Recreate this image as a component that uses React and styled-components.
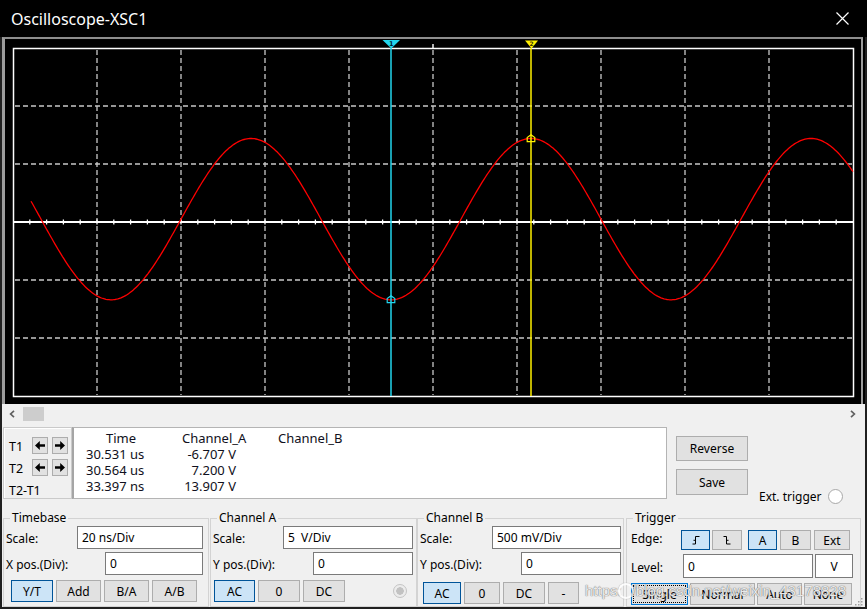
import styled, { createGlobalStyle } from 'styled-components';

const GlobalStyle = createGlobalStyle`
  html, body {
    margin: 0;
    padding: 0;
    background: #000;
  }
  body {
    font-family: "Noto Sans", "Open Sans", sans-serif;
    color: #000;
  }
`;

// screen geometry (page pixels)
const LEFT = 13;
const TOP = 49;
const DIV_X = 84;
const DIV_Y = 58;
const MID_Y = TOP + DIV_Y * 3;
const T1_X = 391;
const T2_X = 531;

const wavePoints = () => {
   const pts = [];
   for (let x = 31; x <= 853; x += 1.5) {
      const v = 0.2465 + 6.9535 * Math.cos((2 * Math.PI * (x - T2_X)) / 280);
      pts.push(`${x.toFixed(1)},${(MID_Y - v * 11.6).toFixed(1)}`);
   }
   return pts.join(' ');
};

const vLines = [1, 2, 3, 4, 5, 6, 7, 8, 9].map((i) => LEFT + DIV_X * i);
const hLines = [1, 2, 4, 5].map((j) => TOP + DIV_Y * j);
const ticks = Array.from({ length: 49 }, (_, k) => LEFT + 16.8 * (k + 1));

function Scope() {
   return (
      <ScopeSvg width="856" height="365" viewBox="5 40 856 365">
         <rect x="13.5" y="49.5" width="840" height="348" fill="none" stroke="#fff" strokeWidth="1.5" />
         {vLines.map((x) => (
            <line key={x} x1={x} y1="51" x2={x} y2="396" stroke="#c8c8c8" strokeWidth="1.3" strokeDasharray="5 3" />
         ))}
         {hLines.map((y) => (
            <line key={y} x1="15" y1={y} x2="852" y2={y} stroke="#c8c8c8" strokeWidth="1.3" strokeDasharray="5 3" />
         ))}
         <line x1="14" y1={MID_Y} x2="853" y2={MID_Y} stroke="#fff" strokeWidth="1.8" />
         {ticks.map((x) => (
            <line key={x} x1={x} y1={MID_Y - 2.5} x2={x} y2={MID_Y + 2.5} stroke="#fff" strokeWidth="1.3" />
         ))}
         <line x1="433" y1="45" x2="433" y2="49" stroke="#fff" strokeWidth="1.4" />

         <polyline points={wavePoints()} fill="none" stroke="#ff0000" strokeWidth="1.3" />

         <line x1={T1_X} y1="49" x2={T1_X} y2="397" stroke="#22d6ee" strokeWidth="1.5" />
         <line x1={T2_X} y1="49" x2={T2_X} y2="397" stroke="#fff000" strokeWidth="1.5" />

         <polygon points="382.5,41 400,41 391.3,49.5" fill="#22d6ee" />
         <text x="391.3" y="46.6" fontSize="6.5" fontWeight="700" textAnchor="middle" fill="#023" fontFamily="DejaVu Sans, sans-serif">1</text>
         <polygon points="525,41.5 538,41.5 531.5,49.5" fill="#fff000" />
         <text x="531.5" y="46.8" fontSize="6" fontWeight="700" textAnchor="middle" fill="#330" fontFamily="DejaVu Sans, sans-serif">2</text>

         <polygon points="391,296.8 394.8,299.6 394.8,303.6 387.2,303.6 387.2,299.6" fill="none" stroke="#22d6ee" strokeWidth="1.2" />
         <polygon points="531,135.8 534.8,138.6 534.8,142.6 527.2,142.6 527.2,138.6" fill="none" stroke="#fff000" strokeWidth="1.2" />
      </ScopeSvg>
   );
}

const Chevron = ({ dir }) => (
   <svg width="6" height="8" viewBox="0 0 6 8">
      <polyline
         points={dir === 'left' ? '5,0.8 1.6,4 5,7.2' : '1,0.8 4.4,4 1,7.2'}
         fill="none"
         stroke="#606060"
         strokeWidth="1.7"
      />
   </svg>
);

const Arrow = ({ dir }) => (
   <svg width="10" height="9" viewBox="0 0 10 9">
      <path
         d={dir === 'left' ? 'M0 4.5 L4.8 0 V3.2 H10 V5.8 H4.8 V9 Z' : 'M10 4.5 L5.2 0 V3.2 H0 V5.8 H5.2 V9 Z'}
         fill="#000"
      />
   </svg>
);

const EdgeIcon = ({ rising }) => (
   <svg width="8" height="9" viewBox="0 0 8 9">
      <path
         d={rising ? 'M0.5 8 H3.5 V0.5 H7.5 M1.5 4.3 H3.5' : 'M0.5 0.5 H3.5 V8 H7.5 M3.5 4.3 H5.5'}
         fill="none"
         stroke="#000"
         strokeWidth="1"
      />
   </svg>
);

function App() {
   return (
      <>
         <GlobalStyle />
         <Window>
            <TitleBar>
               <Title>Oscilloscope-XSC1</Title>
               <CloseIcon width="13" height="13" viewBox="0 0 13 13">
                  <path d="M0.5 0.5 L12.5 12.5 M12.5 0.5 L0.5 12.5" stroke="#fff" strokeWidth="1.2" />
               </CloseIcon>
            </TitleBar>
            <Body>
               <Screen>
                  <Scope />
               </Screen>

               <ScrollRow>
                  <Chevron dir="left" />
                  <Thumb />
                  <ScrollEnd>
                     <Chevron dir="right" />
                  </ScrollEnd>
               </ScrollRow>

               <MiddleRow>
                  <CursorBox>
                     <CursorRow>
                        <CursorLabel>T1</CursorLabel>
                        <ArrowBtn><Arrow dir="left" /></ArrowBtn>
                        <ArrowBtn><Arrow dir="right" /></ArrowBtn>
                     </CursorRow>
                     <CursorRow>
                        <CursorLabel>T2</CursorLabel>
                        <ArrowBtn><Arrow dir="left" /></ArrowBtn>
                        <ArrowBtn><Arrow dir="right" /></ArrowBtn>
                     </CursorRow>
                     <DiffLabel>T2-T1</DiffLabel>
                  </CursorBox>

                  <Readout>
                     <HeadCell $pl={20}>Time</HeadCell>
                     <HeadCell>Channel_A</HeadCell>
                     <HeadCell>Channel_B</HeadCell>

                     <Cell>30.531 us</Cell>
                     <ValueCell>-6.707 V</ValueCell>
                     <Cell />

                     <Cell>30.564 us</Cell>
                     <ValueCell>7.200 V</ValueCell>
                     <Cell />

                     <Cell>33.397 ns</Cell>
                     <ValueCell>13.907 V</ValueCell>
                     <Cell />
                  </Readout>

                  <SideButtons>
                     <Btn $w={72} $h={25}>Reverse</Btn>
                     <Btn $w={72} $h={26}>Save</Btn>
                  </SideButtons>

                  <ExtTrigger>
                     Ext. trigger
                     <Radio />
                  </ExtTrigger>
               </MiddleRow>

               <BottomRow>
                  <Group $w={206} $pr={5}>
                     <Legend>Timebase</Legend>
                     <GroupBody>
                        <FieldRow>
                           <Label>Scale:</Label>
                           <TextBox $w={126}>20 ns/Div</TextBox>
                        </FieldRow>
                        <FieldRow>
                           <Label>X pos.(Div):</Label>
                           <TextBox $w={98}>0</TextBox>
                        </FieldRow>
                        <ButtonRow $ml={5}>
                           <Btn $w={42} $active>Y/T</Btn>
                           <Btn $w={45}>Add</Btn>
                           <Btn $w={45}>B/A</Btn>
                           <Btn $w={45}>A/B</Btn>
                        </ButtonRow>
                     </GroupBody>
                  </Group>

                  <Group $w={207} $pr={3} $ml={1}>
                     <Legend>Channel A</Legend>
                     <GroupBody>
                        <FieldRow>
                           <Label>Scale:</Label>
                           <TextBox $w={130}>5&nbsp; V/Div</TextBox>
                        </FieldRow>
                        <FieldRow>
                           <Label>Y pos.(Div):</Label>
                           <TextBox $w={100}>0</TextBox>
                        </FieldRow>
                        <ButtonRow $ml={1}>
                           <Btn $w={41} $active>AC</Btn>
                           <Btn $w={42}>0</Btn>
                           <Btn $w={42}>DC</Btn>
                           <DisabledRadio />
                        </ButtonRow>
                     </GroupBody>
                  </Group>

                  <Group $w={207} $pr={2}>
                     <Legend>Channel B</Legend>
                     <GroupBody>
                        <FieldRow>
                           <Label>Scale:</Label>
                           <TextBox $w={129}>500 mV/Div</TextBox>
                        </FieldRow>
                        <FieldRow>
                           <Label>Y pos.(Div):</Label>
                           <TextBox $w={100}>0</TextBox>
                        </FieldRow>
                        <ButtonRow $ml={3} $mt={5}>
                           <Btn $w={38} $active>AC</Btn>
                           <Btn $w={36}>0</Btn>
                           <Btn $w={42}>DC</Btn>
                           <Btn $w={31}>-</Btn>
                        </ButtonRow>
                     </GroupBody>
                  </Group>

                  <Group $w={235} $pr={4} $ml={2}>
                     <Legend>Trigger</Legend>
                     <GroupBody>
                        <EdgeRow>
                           <TrigLabel>Edge:</TrigLabel>
                           <BtnCluster>
                              <Btn $w={29} $h={20} $active><EdgeIcon rising /></Btn>
                              <Btn $w={30} $h={20}><EdgeIcon /></Btn>
                           </BtnCluster>
                           <BtnCluster $ml={6} $gap={3}>
                              <Btn $w={29} $h={20} $active>A</Btn>
                              <Btn $w={31} $h={20}>B</Btn>
                              <Btn $w={36} $h={20}>Ext</Btn>
                           </BtnCluster>
                        </EdgeRow>
                        <LevelRow>
                           <TrigLabel>Level:</TrigLabel>
                           <TextBox $w={130} $h={24}>0</TextBox>
                           <UnitBox>V</UnitBox>
                        </LevelRow>
                        <ButtonRow $ml={2} $gap={2}>
                           <Btn $w={57} $focus>Single</Btn>
                           <Btn $w={65}>Normal</Btn>
                           <Btn $w={45}>Auto</Btn>
                           <Btn $w={48}>None</Btn>
                        </ButtonRow>
                     </GroupBody>
                  </Group>
               </BottomRow>
            </Body>

            <Watermark>
               https:<LogoRing />/blog.csdn.net/weixin_43178828
            </Watermark>
            <Grip width="9" height="9" viewBox="0 0 9 9">
               {[[7, 1], [7, 4], [4, 4], [7, 7], [4, 7], [1, 7]].map(([x, y]) => (
                  <rect key={`${x}-${y}`} x={x} y={y} width="1.5" height="1.5" fill="#a0a0a0" />
               ))}
            </Grip>
         </Window>
      </>
   );
}

export default App;

const Window = styled.div`
   position: relative;
   width: 867px;
   height: 609px;
   display: flex;
   flex-direction: column;
   background: #000;
   overflow: hidden;
`;

const TitleBar = styled.div`
   height: 38px;
   display: flex;
   align-items: center;
   padding: 1px 0 0 11px;
   box-sizing: border-box;
`;

const Title = styled.div`
   color: #fff;
   font-size: 16px;
   line-height: 20px;
`;

const CloseIcon = styled.svg`
   margin: -1px 18px 0 auto;
`;

const Body = styled.div`
   flex: 1;
   display: flex;
   flex-direction: column;
   background: #f0f0f0;
   border: 2px solid #202020;
   border-top: none;
`;

const Screen = styled.div`
   height: 365px;
   margin-right: 2px;
   background: #000;
   border-top: 2px solid #8e8e8e;
   border-left: 3px solid #9c9c9c;
   border-right: 2px solid #9c9c9c;
   box-shadow: 2px 0 0 #000;
`;

const ScopeSvg = styled.svg`
   display: block;
`;

const ScrollRow = styled.div`
   height: 20px;
   display: flex;
   align-items: center;
   padding: 0 9px 0 7px;
`;

const Thumb = styled.div`
   width: 21px;
   height: 14px;
   margin-left: 8px;
   background: #cdcdcd;
`;

const ScrollEnd = styled.div`
   margin-left: auto;
   display: flex;
`;

const MiddleRow = styled.div`
   height: 72px;
   margin-top: 3px;
   display: flex;
   padding-left: 1px;
`;

const CursorBox = styled.div`
   width: 69px;
   box-sizing: border-box;
   border: 1px solid #cacaca;
   box-shadow: inset 1px 1px 0 #fff;
   padding: 9px 0 0 5px;
   display: flex;
   flex-direction: column;
   gap: 5px;
`;

const CursorRow = styled.div`
   display: flex;
   align-items: center;
   gap: 4px;
   height: 17px;
`;

const CursorLabel = styled.div`
   width: 19px;
   font-size: 12.5px;
   line-height: 16px;
   padding-top: 3px;
`;

const DiffLabel = styled.div`
   font-size: 12.5px;
   line-height: 16px;
   margin-top: 2px;
`;

const ArrowBtn = styled.div`
   width: 16px;
   height: 17px;
   box-sizing: border-box;
   display: flex;
   align-items: center;
   justify-content: center;
   background: #e1e1e1;
   border: 1px solid #adadad;
`;

const Readout = styled.div`
   width: 595px;
   box-sizing: border-box;
   background: #fff;
   border: 1px solid #b4b4b4;
   border-left: 2px solid #a5a5a5;
   padding: 2px 0 0 12px;
   display: grid;
   grid-template-columns: 96px 96px 1fr;
   grid-auto-rows: 16px;
   font-size: 13px;
   line-height: 16px;
   color: #101020;
`;

const HeadCell = styled.div`
   padding-left: ${(p) => p.$pl || 0}px;
   white-space: nowrap;
`;

const Cell = styled.div`
   white-space: nowrap;
`;

const ValueCell = styled.div`
   white-space: nowrap;
   text-align: right;
   padding-right: 42px;
`;

const SideButtons = styled.div`
   display: flex;
   flex-direction: column;
   gap: 8px;
   margin: 9px 0 0 9px;
`;

const Btn = styled.button`
   box-sizing: border-box;
   width: ${(p) => p.$w}px;
   height: ${(p) => p.$h || 22}px;
   padding: 0;
   display: flex;
   align-items: center;
   justify-content: center;
   font-family: inherit;
   font-size: 12px;
   color: #000;
   background: ${(p) => (p.$active ? '#cce4f7' : '#e1e1e1')};
   border: 1px solid ${(p) => (p.$active ? '#005499' : p.$focus ? '#0078d7' : '#adadad')};
   outline: ${(p) => (p.$focus ? '1px dotted #000' : 'none')};
   outline-offset: -3px;
   border-radius: 0;
`;

const ExtTrigger = styled.div`
   align-self: flex-end;
   display: flex;
   align-items: center;
   gap: 6px;
   margin: 0 0 -6px 11px;
   font-size: 12px;
`;

const Radio = styled.div`
   width: 15px;
   height: 15px;
   box-sizing: border-box;
   border-radius: 50%;
   border: 1px solid #a8a8a8;
   background: #fff;
`;

const DisabledRadio = styled.div`
   width: 14px;
   height: 14px;
   box-sizing: border-box;
   margin: 0 6px 0 auto;
   border-radius: 50%;
   border: 1px solid #c4c4c4;
   background: radial-gradient(circle, #c2c2c2 0 3.5px, #ececec 4px);
`;

const BottomRow = styled.div`
   display: flex;
   margin-top: 12px;
   padding-left: 1px;
`;

const Group = styled.fieldset`
   width: ${(p) => p.$w}px;
   box-sizing: border-box;
   margin: 0 0 0 ${(p) => p.$ml || 0}px;
   padding: 0 ${(p) => p.$pr}px 1px 2px;
   border: 1px solid #d3d3d3;
   min-width: 0;
`;

const Legend = styled.legend`
   font-size: 12px;
   line-height: 14px;
   padding: 0 2px;
   margin-left: 4px;
`;

const GroupBody = styled.div`
   display: flex;
   flex-direction: column;
   gap: 2px;
`;

const FieldRow = styled.div`
   height: 24px;
   display: flex;
   align-items: center;
   justify-content: space-between;
`;

const Label = styled.div`
   font-size: 12px;
   padding-top: 3px;
   white-space: nowrap;
`;

const TextBox = styled.div`
   width: ${(p) => p.$w}px;
   height: ${(p) => p.$h || 23}px;
   box-sizing: border-box;
   display: flex;
   align-items: center;
   padding-left: 4px;
   background: #fff;
   border: 1px solid #7a7a7a;
   font-size: 12px;
   white-space: nowrap;
`;

const ButtonRow = styled.div`
   display: flex;
   align-items: center;
   gap: ${(p) => p.$gap ?? 3}px;
   margin: ${(p) => p.$mt ?? 3}px 0 0 ${(p) => p.$ml || 0}px;
`;

const EdgeRow = styled.div`
   height: 27px;
   display: flex;
   align-items: flex-end;
   padding-bottom: 2px;
   box-sizing: border-box;
`;

const TrigLabel = styled.div`
   width: 50px;
   padding-left: 2px;
   font-size: 12px;
   align-self: center;
   padding-top: 2px;
`;

const BtnCluster = styled.div`
   display: flex;
   gap: ${(p) => p.$gap ?? 2}px;
   margin-left: ${(p) => p.$ml || 0}px;
`;

const LevelRow = styled.div`
   height: 24px;
   display: flex;
   align-items: center;
   gap: 2px;
`;

const UnitBox = styled.div`
   width: 38px;
   height: 24px;
   box-sizing: border-box;
   display: flex;
   align-items: center;
   justify-content: center;
   background: #fff;
   border: 1px solid #7a7a7a;
   font-size: 12px;
`;

const Watermark = styled.div`
   position: absolute;
   left: 585px;
   top: 582px;
   display: flex;
   align-items: center;
   font-family: "Liberation Sans", Arial, sans-serif;
   font-size: 15px;
   color: rgba(255, 255, 255, 0.85);
   text-shadow: 0 0 1px rgba(110, 110, 110, 0.9), 0 0 1px rgba(110, 110, 110, 0.9);
   pointer-events: none;
   white-space: nowrap;
`;

const LogoRing = styled.span`
   display: inline-block;
   width: 12px;
   height: 12px;
   margin: 0 -2px 0 -4px;
   border-radius: 50%;
   border: 2px solid rgba(255, 255, 255, 0.85);
   box-shadow: 0 0 1px rgba(110, 110, 110, 0.8);
`;

const Grip = styled.svg`
   position: absolute;
   right: 4px;
   bottom: 3px;
`;
